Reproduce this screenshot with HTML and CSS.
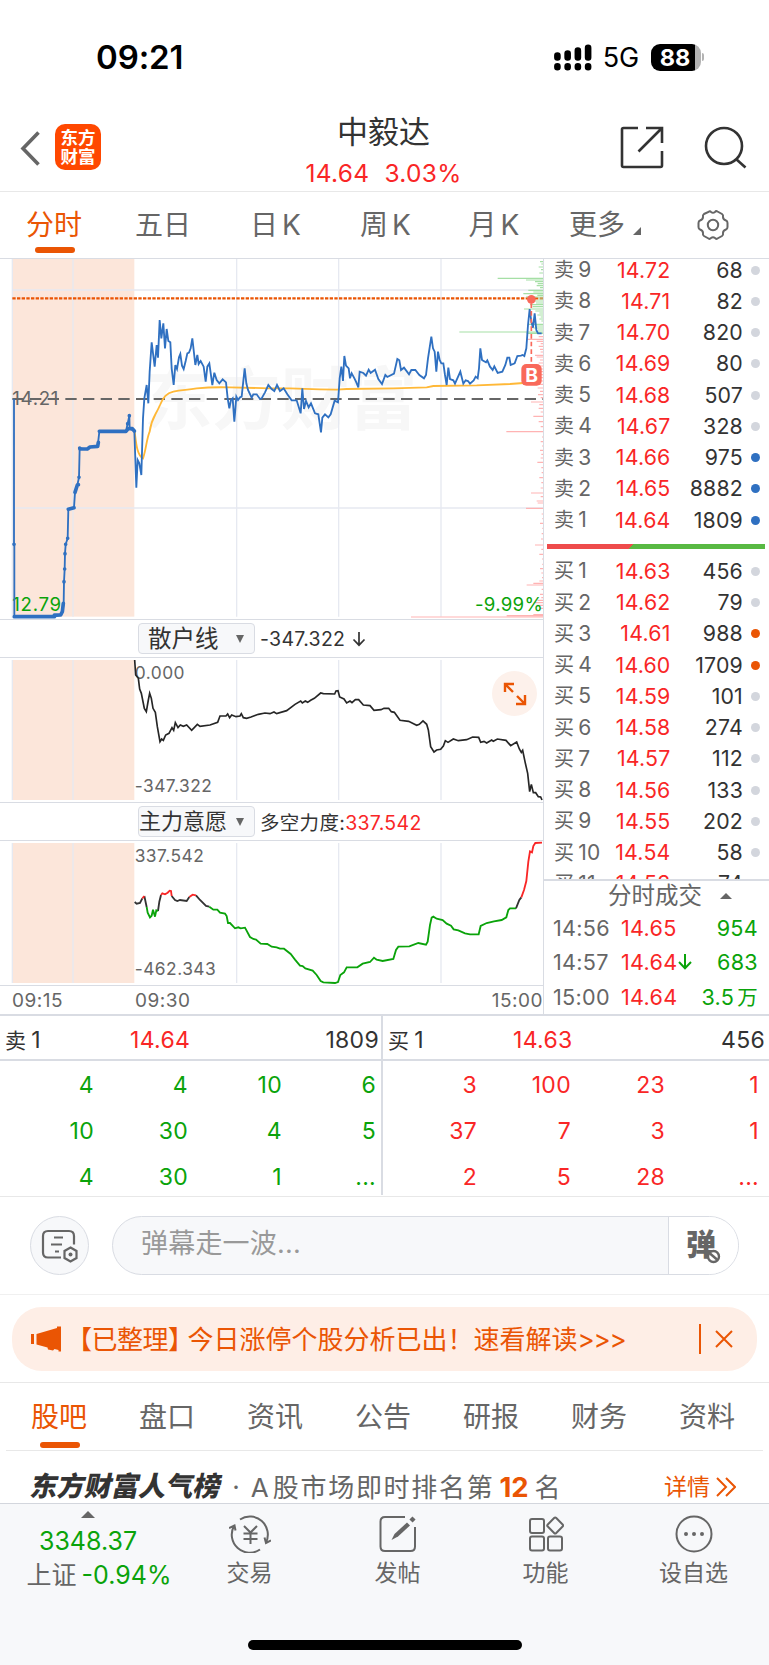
FILE: index.html
```html
<!DOCTYPE html>
<html lang="zh-CN">
<head>
    <meta charset="UTF-8">
    <title>中毅达 14.64 3.03%</title>
    <link rel="stylesheet" href="styles.css">
</head>
<body>

<div class="status-bar">
    <span class="clock">09:21</span>
    <div class="status-icons">
        <svg class="signal" width="38" height="27" viewBox="0 0 39 27">
            <g stroke="#000" stroke-width="6.800" stroke-linecap="round">
                <path d="M3.500 11.500v2M14 9.500v4M24.500 6.500v7M35 3.500v10M3.500 22.500v1M14 22.500v1M24.500 22.500v1M35 22.500v1"/>
            </g>
        </svg>
        <span class="network">5G</span>
        <div class="battery"><span>88</span></div>
        <i class="battery-tip"></i>
    </div>
</div>

<header class="header">
    <svg class="back" width="21" height="35" viewBox="0 0 21 35"><path d="M18.500 1.500L3 17.500l15.500 16" fill="none" stroke="#666" stroke-width="3.600"/></svg>
    <div class="logo"><span>东方</span><span>财富</span></div>
    <div class="stock">
        <h1>中毅达</h1>
        <p><span>14.64</span><span>3.03%</span></p>
    </div>
    <svg class="share" width="44" height="43" viewBox="0 0 44 43" fill="none" stroke="#333" stroke-width="2.600">
        <path d="M18 2H3.500Q2 2 2 3.500V39.500Q2 41 3.500 41H40.500Q42 41 42 39.500V25M26 2H42V17M41.500 2.500L18.500 25.500"/>
    </svg>
    <svg class="search" width="44" height="43" viewBox="0 0 44 43" fill="none" stroke="#333" stroke-width="2.600">
        <circle cx="20" cy="20" r="18"/><path d="M32 33l9.500 8.500"/>
    </svg>
</header>

<nav class="period-tabs">
    <a class="active">分时</a>
    <a>五日</a>
    <a><u>日</u>K</a>
    <a><u>周</u>K</a>
    <a><u>月</u>K</a>
    <a>更多<i></i></a>
    <svg class="gear" width="32" height="32" viewBox="0 0 32 32" fill="none" stroke="#666" stroke-width="2">
        <path d="M11.500 3Q13 1.500 14 3Q16 4.500 18 3Q19 1.500 20.500 2.500L25 5Q26.500 6 26 8Q26 10.500 29 11.500Q30.500 12 30.500 14V18Q30.500 20 29 20.500Q26 21.500 26 24Q26.500 26 25 27L20.500 29.500Q19 30.500 18 29Q16 27.500 14 29Q13 30.500 11.500 29.500L7 27Q5.500 26 6 24Q6 21.500 3 20.500Q1.500 20 1.500 18V14Q1.500 12 3 11.500Q6 10.500 6 8Q5.500 6 7 5Z"/>
        <circle cx="16" cy="16" r="5.200"/>
    </svg>
</nav>

<main class="quote">
    <section class="charts">
        <!-- price chart -->
        <svg class="price-chart" viewBox="0 12 1629 1080">
            <rect class="auction" x="37" y="9" width="366" height="1076"/>
            <text class="watermark" x="432" y="508">东方财富</text>
            <path class="grid" d="M37 9V1090M219 9V1085M710 9V1085M1016 9V1085M1323 9V1085M37 105H1629M37 759H1629"/>
            <path d="M37 130H1629" stroke="#ea5504" stroke-width="7" stroke-dasharray="10 4"/>
            <path d="M37 432H1629" stroke="#666" stroke-width="5.500" stroke-dasharray="34 19"/>
            <text class="axis" x="37" y="449">14.21</text>
            <text class="axis green" x="37" y="1069">12.79</text>
            <g transform="translate(810 0)" fill="none" stroke-width="3.500">
                <path stroke="#a5dfa5" d="M810 20h10M814 27h6M806 36h14M813 44h7M808 54h12M683 70H820M768 75H820M795 80h25M803 86h17M800 92h20M810 98h10M775 106H820M790 111h30M760 116H820M802 121h18M768 126H820M805 132h15M790 138h30M798 144h22M780 149h40M788 155h32M762 162H820M796 168h24M808 174h12M802 180h18M812 186h8M808 192h12M814 198h6M775 208H820M800 213h20M790 219h30M804 225h16M568 231H820M770 235H820"/>
                <path stroke="#ffb3b3" d="M806 245h14M772 253H820M800 259h20M812 266h8M806 274h14M810 283h10M812 291h8M795 301h25M800 306h20M810 315h10M806 324h14M802 333h18M810 342h10M795 350h25M800 359h20M790 368h30M800 378h20M806 388h14M803 399h17M810 409h10M804 419h16M812 428h8M783 441H820M808 449h12M806 460h14M812 471h8M790 484H820M806 500h14M812 515h8M709 530H820M816 546h4M812 560h8M816 573h4M810 586h10M814 598h6M812 609h8M802 622h18M814 638h6M815 653h5M808 668h12M814 683h6M812 699h8M783 714H820M812 725h8M800 738h20M803 744h17M768 760H820M815 777h5M817 791h3M810 805h10M817 820h3M815 836h5M813 852h7M795 870H820M814 883h6M808 898h12M816 912h4M817 928h3M810 941h10M814 954h6M816 968h4M808 978h12M790 985H820M770 990H820M815 1003h5M810 1018h10M814 1028h6M803 1036h17M795 1043h25M800 1051h20M810 1060h10M790 1079H820M710 1082H820M423 1086H820"/>
            </g>
            <path class="avg" d="M404 530C408 560 410 600 429 610C438 585 440 550 449 530C454 490 465 485 480 450C490 425 500 415 520 410C545 403 560 406 590 400C620 397 650 396 690 397L810 400L870 400L960 403L1010 404L1040 402L1180 400L1280 397L1300 393L1430 391L1530 387L1570 384L1620 366"/>
            <path class="line" d="M42 432V868H43V1085H165L182 1080L187 1070L191 1045L192 980L194 942L195 896L197 868L203 850L205 763L222 758L225 712L232 690L237 667L239 580L262 583L268 576L293 574L298 530L378 528L383 506L388 482L389 521L403 528"/>
            <path class="line thick" d="M43 1085H163M163 1080H182L187 1070L190 1045M205 763L222 758M225 712L232 690L235 689M240 582H262L270 576L293 574L295 562M298 529H378L385 521H397L403 528"/>
            <path class="dots" d="M42 868h0M192 980h0M194 942h0M195 896h0M197 868h0M203 850h0M237 667h0M239 579h0M383 506h0M388 482h0"/>
            <polyline class="line" points="403,528 409,698 413,615 418,625 424,660 429,490 433,430 440,390 445,445 449,350 455,262 464,335 470,270 474,308 479,195 484,250 490,205 495,280 500,222 505,258 511,262 515,340 521,390 526,330 531,342 537,307 541,297 546,332 551,342 557,318 562,295 567,293 572,280 577,250 586,330 592,300 596,327 602,318 611,335 617,380 622,335 628,325 637,390 643,353 650,375 658,385 668,373 678,382 683,430 688,460 693,435 698,430 703,500 709,425 714,435 720,427 725,425 734,340 739,385 744,405 755,428 760,418 770,418 780,432 785,430 795,412 805,390 815,402 823,408 831,390 840,408 851,400 862,418 875,436 890,436 902,475 907,400 912,462 918,438 926,457 933,445 945,475 955,478 963,532 967,488 975,478 985,487 992,478 1004,437 1014,442 1019,370 1024,335 1029,378 1033,303 1038,332 1046,340 1050,370 1055,355 1062,368 1068,380 1075,397 1079,350 1090,354 1098,362 1106,344 1112,354 1125,344 1135,372 1146,387 1156,360 1162,366 1182,356 1192,312 1198,316 1203,345 1212,338 1227,358 1234,345 1246,345 1258,360 1272,370 1278,360 1284,310 1294,245 1299,280 1304,290 1309,350 1314,290 1319,315 1324,325 1330,325 1335,360 1340,390 1345,338 1350,372 1360,376 1365,386 1381,350 1390,386 1397,376 1404,378 1410,386 1421,376 1427,365 1433,370 1437,340 1441,280 1446,315 1451,318 1458,322 1462,316 1470,335 1478,345 1483,334 1493,354 1507,350 1516,330 1522,308 1528,308 1532,330 1544,325 1552,303 1563,302 1568,300 1573,303 1579,280 1584,210 1589,162 1594,200 1599,218 1604,175 1609,225 1614,235 1625,235"/>
            <path d="M1594 145V325" stroke="#f9695a" stroke-width="5" stroke-dasharray="14 9"/>
            <circle cx="1594" cy="133" r="13" fill="#f9695a"/>
            <rect x="1564" y="327" width="61" height="65" rx="15" fill="#f9695a"/>
            <text class="buy" x="1595" y="380">B</text>
            <text class="axis green end" x="1629" y="1069">-9.99%</text>
        </svg>

        <div class="indicator-bar">
            <button class="indicator"><span>散户线</span><i></i></button>
            <span>-347.322</span>
            <svg width="14" height="16" viewBox="0 0 14 16"><path d="M7 1V14M1.500 8.500L7 14.200L12.500 8.500" fill="none" stroke="#333" stroke-width="1.700"/></svg>
        </div>
        <div class="panel">
            <svg viewBox="0 129 1629 432">
                <rect class="auction" x="37" y="135" width="366" height="420"/>
                <path class="grid" d="M37 135V555M219 135V555M710 135V555M1016 135V555M1323 135V555"/>
                <text class="axis small" x="404" y="191">0.000</text>
                <text class="axis small" x="404" y="531">-347.322</text>
                <polyline class="retail" points="404,135 407,180 415,190 419,222 424,235 433,280 439,290 445,255 449,235 454,250 459,280 466,292 472,335 480,380 485,372 490,376 497,360 507,355 516,338 521,346 526,323 534,338 541,330 550,334 560,330 575,346 592,328 600,334 630,330 653,322 660,303 678,303 683,297 689,308 695,300 708,305 720,303 724,296 730,308 740,310 753,306 775,298 795,294 810,296 822,291 830,296 860,287 885,268 902,258 907,264 916,258 923,262 932,256 943,250 962,234 970,236 1004,237 1008,228 1014,227 1019,246 1032,252 1040,264 1050,258 1056,263 1066,254 1076,254 1090,270 1110,272 1122,286 1143,284 1152,280 1166,280 1174,290 1183,292 1200,316 1226,319 1250,331 1258,328 1269,318 1280,328 1285,345 1292,395 1302,411 1310,405 1322,403 1330,393 1336,377 1344,382 1360,372 1375,377 1400,374 1418,366 1436,367 1442,382 1452,379 1460,384 1475,375 1480,379 1492,372 1518,376 1532,392 1550,381 1558,402 1564,412 1568,406 1575,440 1583,475 1589,530 1594,508 1600,533 1607,533 1615,545 1622,546 1626,555"/>
            </svg>
            <div class="expand">
                <svg width="24" height="24" viewBox="0 0 24 24" fill="none" stroke="#ea5504" stroke-width="2.400"><path d="M2 10V2H11M2 2L10 10M22 13V22H13M22 22L14 14"/></svg>
            </div>
        </div>

        <div class="indicator-bar">
            <button class="indicator wide"><span>主力意愿</span><i></i></button>
            <span>多空力度:<em>337.542</em></span>
        </div>
        <div class="panel">
            <svg viewBox="0 678 1629 432">
                <rect class="auction" x="37" y="684" width="366" height="420"/>
                <path class="grid" d="M37 684V1104M219 684V1104M710 684V1104M1016 684V1104M1323 684V1104"/>
                <text class="axis small" x="404" y="740">337.542</text>
                <text class="axis small" x="404" y="1080">-462.343</text>
                <g class="force">
                    <path stroke="#333" d="M404 861L410 866L420 864L427 850M433 843L440 876M474 888L478 860L483 840M515 843L525 855L532 858L540 855L560 858L568 846M588 841L600 855L618 873L628 875M1548 880L1558 855L1564 847"/>
                    <path stroke="#f92626" d="M427 850L433 843M483 840L487 835L495 838L503 833L509 827L513 828L515 843M568 846L578 839L588 841M1564 847L1572 825L1579 798L1585 740L1590 709L1596 712L1600 693L1606 684L1626 683"/>
                    <path stroke="#0aa30a" d="M440 876L443 893L450 907L455 902L459 884L465 905L469 886L474 888M628 875L640 884L652 884L660 893L675 896L680 903L684 924L690 924L705 940L715 937L722 940L735 938L750 966L760 972L768 974L782 986L802 987L815 995L830 997L840 1001L852 1001L872 1017L885 1034L900 1052L908 1053L916 1060L938 1067L950 1080L962 1098L970 1102L1005 1104L1014 1101L1021 1080L1032 1072L1040 1057L1072 1057L1088 1046L1110 1041L1122 1028L1130 1034L1148 1038L1180 1032L1188 1005L1195 995L1228 994L1255 984L1278 989L1283 980L1290 930L1295 908L1300 905L1310 911L1328 915L1340 926L1353 932L1361 943L1375 946L1395 955L1410 958L1436 958L1442 933L1460 924L1482 919L1505 915L1519 907L1525 885L1530 880L1548 880"/>
                </g>
            </svg>
        </div>
        <div class="time-axis"><span>09:15</span><span>09:30</span><span>15:00</span></div>
    </section>

    <aside class="book">
        <div class="levels">
            <div class="sell">
                <div class="level"><span>卖<b>9</b></span><em>14.72</em><span>68</span><i></i></div>
                <div class="level"><span>卖<b>8</b></span><em>14.71</em><span>82</span><i></i></div>
                <div class="level"><span>卖<b>7</b></span><em>14.70</em><span>820</span><i></i></div>
                <div class="level"><span>卖<b>6</b></span><em>14.69</em><span>80</span><i></i></div>
                <div class="level"><span>卖<b>5</b></span><em>14.68</em><span>507</span><i></i></div>
                <div class="level"><span>卖<b>4</b></span><em>14.67</em><span>328</span><i></i></div>
                <div class="level"><span>卖<b>3</b></span><em>14.66</em><span>975</span><i class="blue"></i></div>
                <div class="level"><span>卖<b>2</b></span><em>14.65</em><span>8882</span><i class="blue"></i></div>
                <div class="level"><span>卖<b>1</b></span><em>14.64</em><span>1809</span><i class="blue"></i></div>
            </div>
            <div class="ratio"></div>
            <div class="buys">
                <div class="level"><span>买<b>1</b></span><em>14.63</em><span>456</span><i></i></div>
                <div class="level"><span>买<b>2</b></span><em>14.62</em><span>79</span><i></i></div>
                <div class="level"><span>买<b>3</b></span><em>14.61</em><span>988</span><i class="orange"></i></div>
                <div class="level"><span>买<b>4</b></span><em>14.60</em><span>1709</span><i class="orange"></i></div>
                <div class="level"><span>买<b>5</b></span><em>14.59</em><span>101</span><i></i></div>
                <div class="level"><span>买<b>6</b></span><em>14.58</em><span>274</span><i></i></div>
                <div class="level"><span>买<b>7</b></span><em>14.57</em><span>112</span><i></i></div>
                <div class="level"><span>买<b>8</b></span><em>14.56</em><span>133</span><i></i></div>
                <div class="level"><span>买<b>9</b></span><em>14.55</em><span>202</span><i></i></div>
                <div class="level"><span>买<b>10</b></span><em>14.54</em><span>58</span><i></i></div>
                <div class="level"><span>买<b>11</b></span><em>14.53</em><span>74</span><i></i></div>
            </div>
        </div>
        <div class="trades">
            <h2>分时成交<i></i></h2>
            <div class="trade"><span>14:56</span><em>14.65</em><b>954</b></div>
            <div class="trade"><span>14:57</span><em>14.64<svg width="14" height="16" viewBox="0 0 14 16"><path d="M7 0V14M1 8L7 14.200L13 8" fill="none" stroke="#0aa30a" stroke-width="2"/></svg></em><b>683</b></div>
            <div class="trade"><span>15:00</span><em>14.64</em><b>3.5<u>万</u></b></div>
        </div>
    </aside>
</main>

<section class="queue">
    <div class="side">
        <div class="queue-head"><span>卖<b>1</b></span><em>14.64</em><span>1809</span></div>
        <div class="orders green">
            <span>4</span><span>4</span><span>10</span><span>6</span>
            <span>10</span><span>30</span><span>4</span><span>5</span>
            <span>4</span><span>30</span><span>1</span><span>...</span>
        </div>
    </div>
    <div class="side">
        <div class="queue-head"><span>买<b>1</b></span><em>14.63</em><span>456</span></div>
        <div class="orders red">
            <span>3</span><span>100</span><span>23</span><span>1</span>
            <span>37</span><span>7</span><span>3</span><span>1</span>
            <span>2</span><span>5</span><span>28</span><span>...</span>
        </div>
    </div>
</section>

<section class="danmu">
    <div class="danmu-set">
        <svg width="38" height="34" viewBox="0 0 38 34" fill="none" stroke="#666" stroke-width="2.200">
            <path d="M20 28.500H7Q2 28.500 2 23.500V7Q2 2 7 2H28Q33 2 33 7V15.500M13 8.500H22M10 15.500H21M14 22.500H18"/>
            <path d="M29.500 18.500L35.500 22V29L29.500 32.500L23.500 29V22Z"/>
            <circle cx="29.500" cy="25.500" r="2" fill="#666" stroke="none"/>
        </svg>
    </div>
    <div class="danmu-input">
        <span class="placeholder">弹幕走一波...</span>
        <div class="danmu-toggle">
            <span>弹</span>
            <svg width="15" height="15" viewBox="0 0 15 15" fill="#fff" stroke="#666" stroke-width="2.400"><circle cx="7.500" cy="7.500" r="5.500"/><path d="M4 4.500L11 10.500"/></svg>
        </div>
    </div>
</section>

<section class="notice-wrap">
    <div class="notice">
        <svg width="31" height="26" viewBox="0 0 31 26" fill="#ea5504"><path d="M0 8H3V18H0ZM5.500 8L26 2V0.500H30V25.500H27.500V24L23.500 23L22 24.500L17 23.500L16.500 21.500L11 20L5.500 18.500Z"/></svg>
        <p><span class="tag">【已整理】</span>今日涨停个股分析已出！<span>速看解读</span><span class="more">&gt;&gt;&gt;</span></p>
        <svg class="close" width="18" height="18" viewBox="0 0 18 18"><path d="M1 1L17 17M17 1L1 17" stroke="#ea5504" stroke-width="2"/></svg>
    </div>
</section>

<nav class="info-tabs">
    <a class="active">股吧</a>
    <a>盘口</a>
    <a>资讯</a>
    <a>公告</a>
    <a>研报</a>
    <a>财务</a>
    <a>资料</a>
</nav>

<section class="rank">
    <strong>东方财富人气榜</strong>
    <span class="dot">·</span>
    <span class="rank-text">A<u>股市场即时排名第</u><b>12</b>名</span>
    <a>详情<svg width="20" height="20" viewBox="0 0 20 20"><path d="M1 1L10 10L1 19M10 1L19 10L10 19" fill="none" stroke="#ea5504" stroke-width="2"/></svg></a>
</section>

<footer class="toolbar">
    <div class="toolbar-row">
        <div class="index">
            <i></i>
            <span class="green">3348.37</span>
            <span>上证<b class="green">-0.94%</b></span>
        </div>
        <a>
            <svg width="42" height="38" viewBox="0 0 42 38" fill="none" stroke="#666" stroke-width="2">
                <path d="M11 4.500A18 18 0 0 1 37 27.500M31 34.500A18 18 0 0 1 5 11M0 13L5.500 10.500L6.500 15.500M35.500 22.500L37 28L42 25.500"/>
                <path d="M15 11L21.500 17.500L28 11M21.500 17.500V29M14.500 18.500H28.500M14.500 24H28.500"/>
            </svg>
            交易
        </a>
        <a>
            <svg width="38" height="38" viewBox="0 0 38 38" fill="none" stroke="#666" stroke-width="2">
                <path d="M26 2H6Q1.500 2 1.500 6.500V31.500Q1.500 36 6 36H31.500Q36 36 36 31.500V12"/>
                <path d="M32 6L35 3" stroke-width="4.500"/><path d="M12.500 25L15.500 19L28 7.500L31 10.500L19 21.500Z" fill="#666" stroke="none"/>
            </svg>
            发帖
        </a>
        <a>
            <svg width="36" height="38" viewBox="0 0 36 38" fill="none" stroke="#666" stroke-width="2">
                <rect x="2" y="4" width="14" height="14" rx="2"/><rect x="2" y="21.500" width="14" height="14" rx="2"/><rect x="20" y="21.500" width="14" height="14" rx="2"/>
                <rect x="21.200" y="4.500" width="12" height="12" rx="1.500" transform="rotate(45 27.200 10.500)"/>
            </svg>
            功能
        </a>
        <a>
            <svg width="38" height="38" viewBox="0 0 38 38" fill="none" stroke="#666" stroke-width="2">
                <circle cx="19" cy="19" r="17.500"/><path d="M11 19h0M19 19h0M27 19h0" stroke-width="4" stroke-linecap="round"/>
            </svg>
            设自选
        </a>
    </div>
    <div class="home-bar"></div>
</footer>

</body>
</html>
```

FILE: styles.css
```css
* {
    box-sizing: border-box;
}

body {
    width: 769px;
    height: 1665px;
    margin: 0;
    overflow: hidden;
    background-color: #fff;
    color: #333;
    font-family: Inter, "Noto Sans CJK SC", sans-serif;
    font-size: 21px;
}

h1, h2, p {
    margin: 0;
    font-weight: 400;
}

em, i {
    font-style: normal;
}

u {
    text-decoration: none;
}

svg {
    display: block;
    flex: none;
}

.green {
    color: #0aa30a;
}

.red,
em {
    color: #f92626;
}

/* status bar */
.status-bar {
    display: flex;
    justify-content: space-between;
    align-items: center;
    height: 114px;
    padding: 0 65px 0 96px;
    color: #000;
}

.clock {
    font-size: 33px;
    font-weight: 600;
    letter-spacing: -0.1px;
}

.status-icons {
    display: flex;
    align-items: center;
}

.network {
    margin: 1px 12px 0 11px;
    font-size: 27px;
    font-weight: 400;
    letter-spacing: -0.2px;
}

.battery {
    width: 50px;
    height: 27px;
    border-radius: 9px;
    background: linear-gradient(to right, #000 44px, #b3b3b3 44px);
    color: #fff;
    font-size: 23.5px;
    font-weight: 700;
    line-height: 27px;
    text-align: center;
}

.battery span {
    margin-right: 2px;
}

.battery-tip {
    width: 2px;
    height: 8px;
    margin-left: 1px;
    border-radius: 0 3px 3px 0;
    background-color: #b3b3b3;
}

/* header */
.header {
    display: flex;
    align-items: center;
    height: 78px;
    padding: 0 21px 0 20px;
    border-bottom: 1px solid #e8e8e8;
}

.back {
    margin-top: -9px;
}

.logo {
    display: flex;
    flex-direction: column;
    justify-content: center;
    width: 46px;
    height: 46px;
    margin: -11px 0 0 14px;
    border-radius: 10px;
    background-color: #ff4800;
    color: #fff;
    font-size: 17.5px;
    font-weight: 700;
    line-height: 19px;
    text-align: center;
}

.stock {
    flex: 1;
    margin-left: 46px;
    text-align: center;
}

.stock h1 {
    font-size: 31px;
    line-height: 40px;
}

.stock p {
    display: flex;
    justify-content: center;
    gap: 15px;
    color: #f92626;
    font-size: 24.5px;
    letter-spacing: 0.3px;
    line-height: 42px;
}

.share {
    margin-top: -10px;
}

.search {
    margin: -10px 0 0 40px;
}

/* period tabs */
.period-tabs {
    display: grid;
    grid-template-columns: 108px 110px 115px 105px 112px 110px 109px;
    align-items: center;
    height: 67px;
    border-bottom: 1px solid #d9dce3;
    color: #666;
    font-size: 28px;
    text-align: center;
}

.period-tabs a {
    line-height: 66px;
    white-space: nowrap;
}

.period-tabs u {
    margin-right: 4px;
}

.period-tabs a i {
    display: inline-block;
    margin-left: 8px;
    border: 4px solid;
    border-color: transparent #666 #666 transparent;
}

.period-tabs .gear {
    margin-left: 37px;
}

.period-tabs .active,
.info-tabs .active {
    position: relative;
    color: #ea5504;
}

.period-tabs .active::after,
.info-tabs .active::after {
    content: "";
    position: absolute;
    left: 50%;
    bottom: 5px;
    width: 40px;
    height: 6px;
    margin-left: -19px;
    border-radius: 3px;
    background-color: #ea5504;
}

/* charts */
.quote {
    display: flex;
    height: 757px;
    border-bottom: 2px solid #d9dce3;
}

.charts {
    width: 544px;
    border-right: 1px solid #d9dce3;
}

.charts svg text {
    font-family: Inter, "Noto Sans CJK SC", sans-serif;
}

.price-chart {
    width: 543px;
    height: 361px;
    border-bottom: 1px solid #d9dce3;
}

.auction {
    fill: #fce6da;
}

.grid {
    fill: none;
    stroke: #e6e9f1;
    stroke-width: 4;
}

.watermark {
    fill: #f7f7f7;
    font-size: 205px;
    font-weight: 700;
}

.axis {
    fill: #666;
    font-size: 56px;
    letter-spacing: 2px;
}

.axis.small {
    font-size: 52px;
    letter-spacing: 1.5px;
}

.axis.green {
    fill: #0aa30a;
}

.axis.end {
    letter-spacing: 0.8px;
    text-anchor: end;
}

.buy {
    fill: #fff;
    font-size: 58px;
    font-weight: 700;
    text-anchor: middle;
}

.line,
.dots,
.avg,
.retail,
.force {
    fill: none;
    stroke: #2f70c1;
    stroke-width: 5.5;
}

.line.thick {
    stroke-width: 11;
    stroke-linecap: round;
    stroke-linejoin: round;
}

.dots {
    stroke-width: 11;
    stroke-linecap: round;
}

.avg {
    stroke: #ffb837;
}

.retail {
    stroke: #262626;
    stroke-width: 5;
}

.indicator-bar {
    display: flex;
    align-items: center;
    height: 38px;
    padding-left: 138px;
    border-bottom: 1px solid #d9dce3;
    font-size: 19.5px;
    letter-spacing: 0.3px;
}

.indicator {
    display: flex;
    justify-content: space-between;
    align-items: center;
    width: 117px;
    height: 31px;
    margin-right: 5px;
    padding: 0 10px 0 9px;
    border: 1px solid #d9dce3;
    border-radius: 4px;
    background-color: #f7f8fa;
    color: #333;
    font-family: inherit;
    font-size: 23.5px;
    line-height: 29px;
}

.indicator.wide {
    padding-left: 0;
    font-size: 22px;
}

.indicator i {
    border: 4.5px solid transparent;
    border-top: 8px solid #666;
    border-bottom: 0;
}

.indicator-bar svg {
    margin-left: 7px;
}

.panel {
    position: relative;
    height: 145px;
    border-bottom: 1px solid #d9dce3;
}

.panel > svg {
    width: 543px;
    height: 144px;
}

.expand {
    position: absolute;
    top: 13px;
    right: 6px;
    display: flex;
    justify-content: center;
    align-items: center;
    width: 45px;
    height: 45px;
    border-radius: 50%;
    background-color: #fdf1eb;
}

.time-axis {
    display: grid;
    grid-template-columns: 123px 1fr auto;
    padding-left: 12px;
    color: #666;
    font-size: 19px;
    letter-spacing: 0.5px;
    line-height: 29px;
}

/* order book */
.book {
    width: 225px;
}

.levels {
    height: 622px;
    overflow: hidden;
    border-bottom: 2px solid #d9dce3;
}

.sell {
    margin-top: -5px;
}

.level {
    display: grid;
    grid-template-columns: 56px 60.5px 72.5px 17px;
    align-items: center;
    height: 31.26px;
    padding-left: 10px;
    font-size: 21.3px;
    letter-spacing: 0.2px;
    line-height: 31px;
    text-align: right;
}

.level span:first-child {
    color: #666;
    font-size: 20px;
    text-align: left;
}

.level b {
    margin-left: 4px;
    font-size: 21px;
    font-weight: 400;
}

.level i {
    width: 9px;
    height: 9px;
    margin-left: 8px;
    border-radius: 50%;
    background-color: #d3d6dd;
}

.level i.blue {
    background-color: #2f70c1;
}

.level i.orange {
    background-color: #ea5504;
}

.ratio {
    width: 218px;
    height: 5px;
    margin: 9px 0 6px 3px;
    background: linear-gradient(135deg, #ee4b4b 61px, #58b943 61px);
}

.trades h2 {
    padding-left: 64px;
    color: #666;
    font-size: 23.5px;
    line-height: 30px;
}

.trades h2 i {
    display: inline-block;
    margin: 0 0 5px 18px;
    border: 6px solid transparent;
    border-top: 0;
    border-bottom-color: #666;
}

.trade {
    display: grid;
    grid-template-columns: 68px 75px 62px;
    height: 34.4px;
    padding-left: 9px;
    font-size: 21.6px;
    letter-spacing: 0.3px;
    line-height: 34px;
}

.trade span {
    color: #666;
}

.trade em {
    display: flex;
    align-items: center;
    height: 34px;
}

.trade b {
    height: 34px;
    color: #0aa30a;
    font-weight: 400;
    text-align: right;
    white-space: nowrap;
}

.trade u {
    margin-left: 3px;
    font-size: 20.5px;
    line-height: 20px;
}

/* order queue */
.queue {
    display: flex;
    height: 181px;
    border-bottom: 1px solid #e8e8e8;
}

.side {
    width: 386px;
}

.side:first-child {
    width: 383px;
    height: 179px;
    border-right: 2px solid #d9dce3;
}

.queue-head {
    display: grid;
    grid-template-columns: 125px 1fr auto;
    height: 45px;
    padding: 0 2px 0 5px;
    border-bottom: 2px solid #d9dce3;
    font-size: 23px;
    letter-spacing: 0.3px;
    line-height: 48px;
}

.side:last-child .queue-head {
    padding-right: 4px;
}

.queue-head span:first-child {
    font-size: 21px;
}

.queue-head b {
    margin-left: 5px;
    font-size: 23px;
    font-weight: 400;
}

.orders {
    display: grid;
    grid-template-columns: repeat(4, 94px);
    grid-auto-rows: 46px;
    font-size: 23px;
    letter-spacing: 0.3px;
    line-height: 49px;
    text-align: right;
}

/* danmu */
.danmu {
    display: flex;
    align-items: center;
    gap: 23px;
    height: 98px;
    padding: 0 30px 0 30px;
    border-bottom: 1px solid #f0f0f0;
}

.danmu-set {
    display: flex;
    justify-content: center;
    align-items: center;
    width: 59px;
    height: 59px;
    border: 1px solid #d9dce3;
    border-radius: 50%;
    background-color: #f7f8fa;
}

.danmu-input {
    display: flex;
    flex: 1;
    height: 59px;
    overflow: hidden;
    border: 1px solid #d9dce3;
    border-radius: 30px;
    background-color: #f7f8fa;
}

.placeholder {
    flex: 1;
    padding-left: 28px;
    color: #999;
    font-size: 27px;
    letter-spacing: 0.2px;
    line-height: 53px;
}

.danmu-toggle {
    position: relative;
    width: 70px;
    border-left: 1px solid #d9dce3;
    background-color: #fff;
    color: #666;
    font-size: 30px;
    font-weight: 900;
    line-height: 55px;
}

.danmu-toggle span {
    margin-left: 17px;
}

.danmu-toggle svg {
    position: absolute;
    left: 37px;
    top: 32px;
}

/* notice */
.notice-wrap {
    padding: 12px 12px 11px;
    border-bottom: 1px solid #e8e8e8;
}

.notice {
    display: flex;
    align-items: center;
    height: 64px;
    padding: 0 24px 0 19px;
    border-radius: 30px;
    background-color: #feeee6;
    color: #ea5504;
    font-size: 26px;
}

.notice p {
    flex: 1;
    margin: -3px 0 0 4px;
    white-space: nowrap;
}

.notice .tag {
    margin-right: -6px;
    letter-spacing: -0.5px;
}

.notice .more {
    letter-spacing: -1.2px;
}

.close {
    box-sizing: content-box;
    padding: 6px 0 6px 14px;
    border-left: 2px solid #ea5504;
}

/* info tabs */
.info-tabs {
    display: grid;
    grid-template-columns: repeat(7, 108px);
    height: 68px;
    margin: 0 6px;
    border-bottom: 1px solid #e8e8e8;
    color: #666;
    font-size: 28px;
    line-height: 68px;
    text-align: center;
    text-indent: -2px;
}

.info-tabs .active::after {
    bottom: 3px;
    margin-left: -20px;
}

/* rank */
.rank {
    display: flex;
    align-items: center;
    height: 52px;
    padding: 20px 33px 0 31px;
    color: #666;
    font-size: 26px;
    line-height: 32px;
    white-space: nowrap;
}

.rank strong {
    color: #333;
    font-size: 27.2px;
    font-weight: 900;
    transform: skewX(-12deg);
}

.rank .dot {
    margin: 0 11px;
}

.rank b {
    margin: 0 6px 0 5px;
    color: #ea5504;
    font-size: 27.5px;
    font-weight: 700;
}

.rank u {
    margin-left: 4px;
    letter-spacing: 1.7px;
}

.rank a {
    display: flex;
    align-items: center;
    gap: 6px;
    margin-left: auto;
    color: #ea5504;
    font-size: 23px;
}

/* toolbar */
.toolbar {
    height: 163px;
    border-top: 1px solid #d3d6dd;
    background-color: #f7f8fa;
    color: #666;
    font-size: 23px;
}

.toolbar-row {
    display: grid;
    grid-template-columns: 176px repeat(4, 148px);
    height: 136px;
}

.toolbar a {
    display: flex;
    flex-direction: column;
    align-items: center;
    padding-top: 11px;
    line-height: 40px;
    text-indent: -1px;
}

.index {
    display: flex;
    flex-direction: column;
    align-items: center;
    padding-top: 7px;
    font-size: 25px;
    line-height: 34px;
}

.index span:last-child {
    padding-left: 22px;
    white-space: nowrap;
}

.index b {
    margin-left: 5px;
    font-weight: 400;
}

.index i {
    margin-bottom: 6px;
    border: 7px solid transparent;
    border-top: 0;
    border-bottom-color: #666;
}

.home-bar {
    width: 274px;
    height: 10px;
    margin: 0 auto;
    border-radius: 5px;
    background-color: #000;
}
```
